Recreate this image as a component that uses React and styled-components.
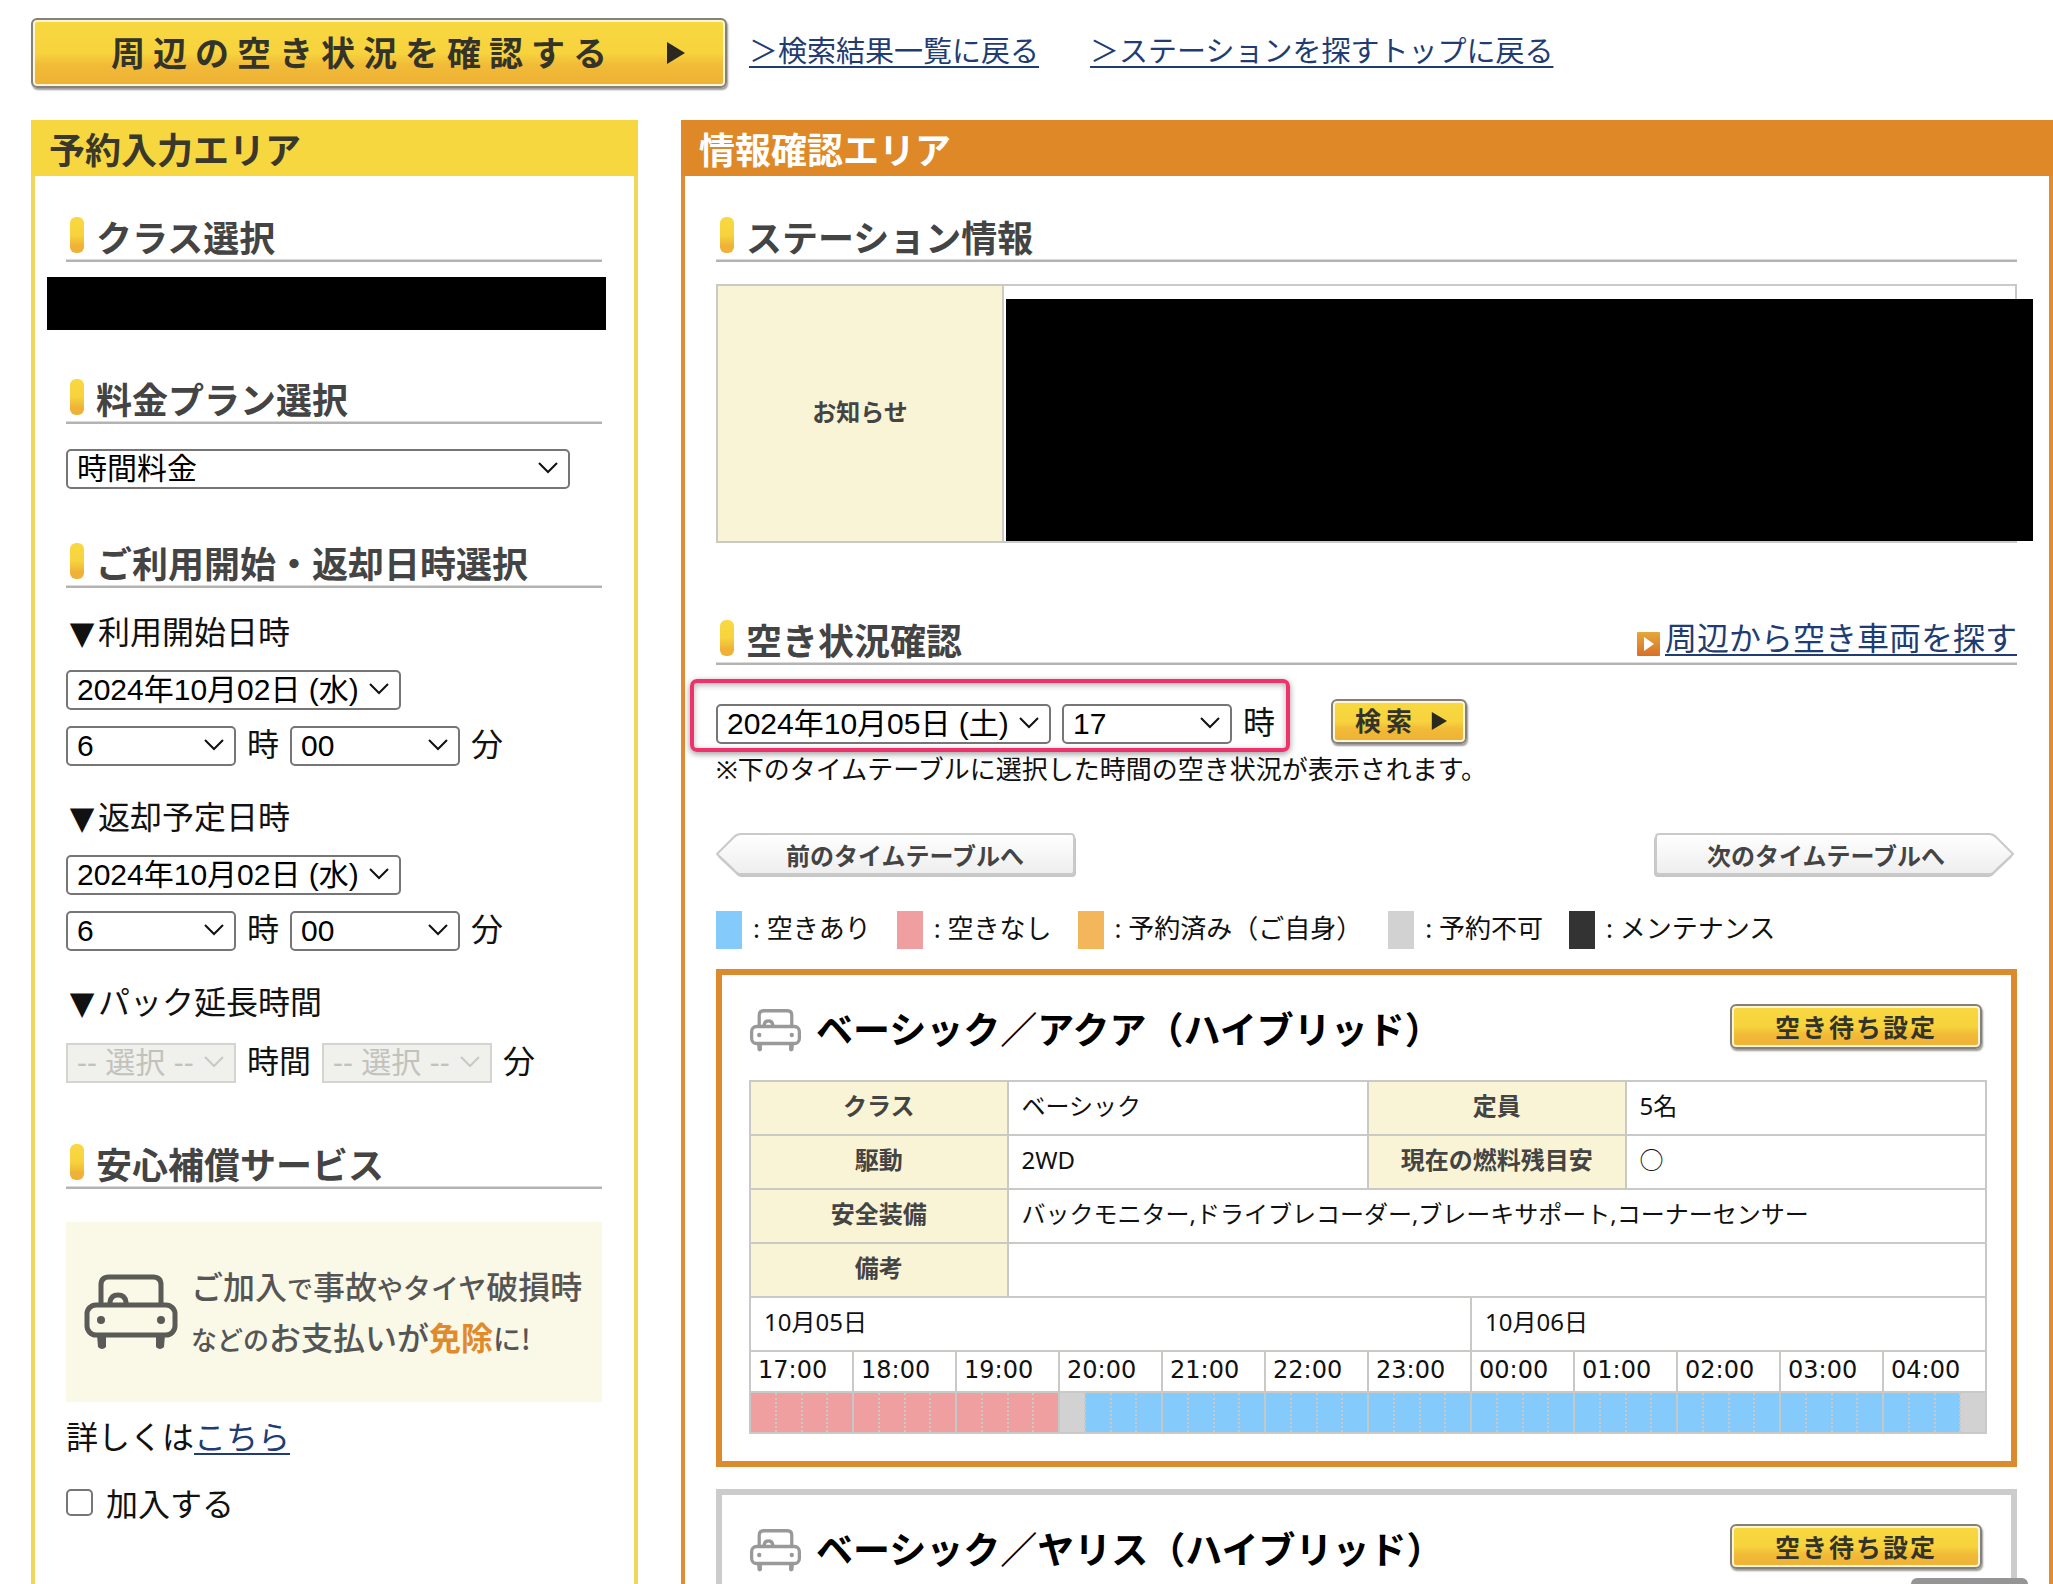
import React from "react";
import styled, { createGlobalStyle, css } from "styled-components";

const jp = `"Noto Sans CJK JP", sans-serif`;

const GlobalStyle = createGlobalStyle`
  *, *::before, *::after { box-sizing: border-box; }
  body {
    margin: 0;
    background: #fff;
    color: #111;
    font-family: "Noto Sans", ${jp};
    font-size: 32px;
    line-height: 40px;
  }
  a { color: #1f3d73; text-underline-offset: 4px; text-decoration-thickness: 2px; }
  h1, h2, h3, p { margin: 0; }
`;

const Page = styled.div`
  display: flex;
  flex-direction: column;
  height: 100vh;
  overflow: hidden;
`;

const TopBar = styled.header`
  display: flex;
  align-items: flex-start;
  flex: none;
  padding: 18px 0 31px 31px;
`;

const TopLinks = styled.nav`
  display: flex;
  gap: 51px;
  padding: 13px 0 0 22px;
  font-size: 29px;
  white-space: nowrap;
`;

const GoldButton = styled.button`
  display: flex;
  align-items: center;
  justify-content: center;
  flex: none;
  border: 2px solid #85817a;
  border-radius: 6px;
  color: #333329;
  font-family: ${jp};
  font-weight: 700;
  background: linear-gradient(#f8d840 0%, #f7d33e 50%, #f1bb38 68%, #efb034 100%);
  box-shadow: inset 0 0 0 2px #fdf6d6, 1px 2px 2px #9a9a9a;
  white-space: nowrap;
`;

const AreaButton = styled(GoldButton)`
  width: 696px;
  height: 70px;
  padding: 0 40px 3px 78px;
  justify-content: space-between;
  margin-bottom: 1px;
  font-size: 34px;
  letter-spacing: 8px;

  svg { margin-top: 3px; }
`;

const SearchButton = styled(GoldButton)`
  width: 136px;
  height: 45px;
  margin: 0 0 2px 45px;
  padding: 0 18px 3px 22px;
  justify-content: space-between;
  font-size: 26px;
  letter-spacing: 5px;

  svg { margin-top: 3px; }
`;

const WaitButton = styled(GoldButton)`
  width: 252px;
  height: 45px;
  margin: 0 5px 2px auto;
  padding-bottom: 3px;
  font-size: 25px;
  letter-spacing: 2px;
`;

const Columns = styled.main`
  display: flex;
  flex: 1;
  gap: 43px;
  min-height: 0;
  padding-left: 31px;
`;

const Panel = styled.section`
  display: flex;
  flex-direction: column;
  min-width: 0;
  border: solid ${(p) => p.$color};
  border-width: 0 4px;
`;

const EntryPanel = styled(Panel)`
  flex: 0 0 607px;
`;

const InfoPanel = styled(Panel)`
  flex: 1;
`;

const PanelTitle = styled.h1`
  flex: none;
  height: 56px;
  margin: 0 -4px;
  padding-left: 18px;
  background: ${(p) => p.$bg};
  color: ${(p) => p.$ink};
  font-family: ${jp};
  font-size: 36px;
  line-height: 56px;
`;

const PanelBody = styled.div`
  display: flex;
  flex-direction: column;
  flex: 1;
  min-height: 0;
  padding: 41px 32px 0 31px;
`;

const Heading = styled.div`
  display: flex;
  flex: none;
  height: 45px;
  margin-top: ${(p) => p.$top || 0}px;
  padding-left: 4px;
  border-bottom: 2px solid #b3b3b3;
  box-shadow: inset 0 -1px #dadada;

  &::before {
    content: "";
    width: 14px;
    height: 36px;
    margin-right: 12px;
    border-radius: 6px;
    background: linear-gradient(#f8d942 0%, #f7d33e 50%, #efb236 80%, #efb236 100%);
  }

  h2 {
    color: #444;
    font-family: ${jp};
    font-size: 36px;
    line-height: 39px;
    white-space: nowrap;
  }
`;

const HeadingLink = styled.a`
  display: flex;
  align-items: flex-end;
  gap: 5px;
  margin-left: auto;
  height: 38px;
  white-space: nowrap;
  text-decoration: none;

  span {
    line-height: 40px;
    text-decoration: underline;
    text-decoration-thickness: 2px;
  }
`;

const ClassMask = styled.div`
  flex: none;
  height: 53px;
  margin: 15px -4px 0 -19px;
  background: #000;
`;

const Field = styled.span`
  position: relative;
  display: block;
  flex: none;
  width: ${(p) => p.$width}px;
  height: 40px;
  margin-top: ${(p) => p.$top || 0}px;

  svg {
    position: absolute;
    right: 12px;
    top: 15px;
    pointer-events: none;
    color: ${(p) => (p.$off ? "#c8c8c4" : "#111")};
  }
`;

const Select = styled.select`
  appearance: none;
  width: 100%;
  height: 40px;
  padding: 0 0 0 9px;
  border: 2px solid #767676;
  border-radius: 5px;
  background: #fff;
  color: #000;
  font: 30px/36px "Liberation Sans", ${jp};
  opacity: 1;

  &:disabled {
    border-color: #d4d4d0;
    border-radius: 0;
    background: #f0f0ec;
    color: #c2c2bc;
  }
`;

const Stack = styled.div`
  display: flex;
  flex-direction: column;
  gap: ${(p) => p.$gap || 16}px;
  margin-top: ${(p) => p.$top}px;
`;

const DownMark = styled.span`
  display: inline-block;
  width: 32px;
  text-align: center;
  line-height: 1;
  font-family: "DejaVu Sans", sans-serif;
`;

const Row = styled.div`
  display: flex;
  align-items: center;
  gap: 11px;
`;

const Banner = styled.div`
  display: flex;
  align-items: center;
  flex: none;
  gap: 13px;
  height: 180px;
  margin-top: 33px;
  padding: 0 0 0 18px;
  background: #faf8e6;
  color: #555;
  font-family: ${jp};
  font-weight: 500;
  font-size: 32px;
  line-height: 49px;
  white-space: nowrap;

  small { font-size: 26px; }
  i { font-size: 28px; font-style: normal; }
  strong { color: #e08a2c; }
`;

const Detail = styled.p`
  margin-top: 15px;
`;

const JoinLabel = styled.label`
  display: flex;
  align-items: center;
  gap: 13px;
  margin-top: 27px;

  input {
    appearance: none;
    width: 27px;
    height: 27px;
    margin: 0 0 4px;
    border: 2px solid #767676;
    border-radius: 5px;
    background: #fff;
  }
`;

const cellBorder = css`
  border: 2px solid #c9c9c5;
`;

const Table = styled.table`
  width: 100%;
  border-collapse: collapse;
  table-layout: fixed;
  font-size: 24px;
  line-height: 32px;

  th {
    ${cellBorder}
    padding: 0 0 4px;
    background: #f9f4d6;
    color: #444;
    font-weight: 700;
    white-space: nowrap;
  }
  td {
    ${cellBorder}
    padding: 0 0 4px 13px;
    white-space: nowrap;
  }
`;

const NoticeTable = styled(Table)`
  flex: none;
  height: 259px;
  margin-top: 22px;

  th { width: 286px; }
  td { position: relative; }
`;

const NoticeMask = styled.div`
  position: absolute;
  inset: 13px -18px 0 2px;
  background: #000;
`;

const SearchRow = styled.div`
  position: relative;
  display: flex;
  align-items: center;
  gap: 11px;
  flex: none;
  height: 46px;
  margin-top: 34px;
`;

const Marker = styled.div`
  position: absolute;
  left: -26px;
  top: -20px;
  width: 600px;
  height: 73px;
  border: 4px solid #f0326c;
  border-radius: 7px;
  box-shadow: 0 2px 6px rgba(0, 0, 0, 0.4), inset 0 2px 6px rgba(0, 0, 0, 0.3);
  pointer-events: none;
`;

const Note = styled.p`
  margin-top: 8px;
  font-size: 26px;
  line-height: 32px;
  white-space: nowrap;
`;

const Pager = styled.div`
  display: flex;
  justify-content: space-between;
  flex: none;
  margin: 48px 3px 0 0;
`;

const PagerButton = styled.button`
  display: grid;
  align-items: center;
  width: 360px;
  height: 45px;
  padding: 0;
  border: 0;
  background: none;
  color: #444;
  font: 700 24px/32px ${jp};

  svg, span { grid-area: 1 / 1; }
  svg { transform: ${(p) => (p.$next ? "scaleX(-1)" : "none")}; }
  span {
    z-index: 1;
    padding: ${(p) => (p.$next ? "0 16px 2px 0" : "0 0 2px 18px")};
  }
`;

const Legend = styled.ul`
  display: flex;
  flex: none;
  gap: 26px;
  margin: 33px 0 0;
  padding: 0;
  list-style: none;
  font-size: 26px;
  line-height: 34px;
  white-space: nowrap;
`;

const LegendItem = styled.li`
  display: flex;
  gap: 11px;

  &::before {
    content: "";
    width: 26px;
    height: 38px;
    background: ${(p) => p.$color};
  }
`;

const Card = styled.article`
  display: flex;
  flex-direction: column;
  flex: ${(p) => (p.$rest ? 1 : "none")};
  margin-top: ${(p) => (p.$rest ? 22 : 20)}px;
  padding: 29px 24px ${(p) => (p.$rest ? 0 : 27)}px 27px;
  border: 6px solid ${(p) => p.$color};
  border-bottom-width: ${(p) => (p.$rest ? 0 : 6)}px;
`;

const CardHead = styled.div`
  display: flex;
  align-items: center;
  gap: 15px;
  height: 47px;

  svg { flex: none; margin: 5px 0 0 1px; }
  h3 {
    font-family: ${jp};
    font-size: 37px;
    line-height: 46px;
    color: #000;
    white-space: nowrap;
  }
`;

const VehicleTable = styled(Table)`
  margin-top: 29px;

  tr { height: 54px; }
`;

const HourRow = styled.tr`
  && { height: 41px; }
  && td {
    padding: 0 0 4px 7px;
    font-family: "DejaVu Sans", sans-serif;
  }
`;

const SlotRow = styled.tr`
  && { height: 41px; }
`;

const Slot = styled.td`
  && {
    padding: 0;
    background: ${(p) => p.$color};
    border-left: 2px ${(p) => (p.$hour ? "solid" : "dotted")} #c4c8c8;
    border-right-style: dotted;
  }
  &&:last-child { border-right-style: solid; }
`;

const PageTop = styled.div`
  position: fixed;
  right: 25px;
  bottom: 0;
  width: 117px;
  height: 6px;
  border-radius: 6px 6px 0 0;
  background: #959595;
`;

const Chevron = () => (
  <svg width="20" height="12" viewBox="0 0 20 12" fill="none" stroke="currentColor" strokeWidth="2">
    <path d="M1 1l9 9 9-9" />
  </svg>
);

const Triangle = ({ w = 19, h = 22 }) => (
  <svg width={w} height={h} viewBox="0 0 19 22" preserveAspectRatio="none">
    <path d="M1 0L19 11 1 22z" fill="#2a281f" />
  </svg>
);

const Car = ({ width, height, color, line = 5 }) => (
  <svg width={width} height={height} viewBox="0 0 94 76" preserveAspectRatio="none" fill="none" stroke={color} strokeWidth={line}>
    <path d="M17 31V11q0-8 8-8h44q8 0 8 8v20" />
    <path d="M26 31v-3q1-7 8-7t8 7v3" />
    <rect x="3" y="31" width="88" height="30" rx="9" />
    <circle cx="17" cy="46" r="4" fill={color} stroke="none" />
    <circle cx="77" cy="46" r="4" fill={color} stroke="none" />
    <path d="M13 61h9v12q-4 4-8 0zM72 61h9l-1 12q-4 4-8 0z" fill={color} stroke="none" />
  </svg>
);

const ArrowBadge = () => (
  <svg width="23" height="26" viewBox="0 0 23 26">
    <defs>
      <linearGradient id="badge" x1="0" y1="0" x2="0" y2="1">
        <stop offset="0" stopColor="#e5a83a" />
        <stop offset="1" stopColor="#d96f28" />
      </linearGradient>
    </defs>
    <rect width="23" height="24" rx="1" fill="url(#badge)" />
    <path d="M7 5l10 7-10 7z" fill="#fff" />
  </svg>
);

const PagerShape = () => (
  <svg width="360" height="45" viewBox="0 0 360 45">
    <defs>
      <linearGradient id="pager" x1="0" y1="0" x2="0" y2="1">
        <stop offset="0" stopColor="#fff" />
        <stop offset="1" stopColor="#eee" />
      </linearGradient>
    </defs>
    <path d="M24 3H356q4 0 4 4V40q0 4-4 4H26q-4 0-7-4L2 24z" fill="#c6c6c6" />
    <path d="M25 1H355q3 0 3 3V38q0 3-3 3H25q-4 0-7-4L1 21 18 4q3-3 7-3z" fill="url(#pager)" stroke="#cacaca" strokeWidth="2" />
  </svg>
);

const Choice = ({ label, value, width, top, disabled }) => (
  <Field $width={width} $top={top} $off={disabled}>
    <Select aria-label={label} disabled={disabled} defaultValue={value}>
      <option value={value}>{value}</option>
    </Select>
    <Chevron />
  </Field>
);

const DateGroup = ({ title, top }) => (
  <Stack $top={top}>
    <div><DownMark>▼</DownMark>{title}</div>
    <Choice label={title} value="2024年10月02日 (水)" width={335} />
    <Row>
      <Choice label="時" value="6" width={170} />
      <span>時</span>
      <Choice label="分" value="00" width={170} />
      <span>分</span>
    </Row>
  </Stack>
);

const colors = { free: "#84cafb", full: "#f09fa1", none: "#d2d2d2" };
const hours = ["17", "18", "19", "20", "21", "22", "23", "00", "01", "02", "03", "04"];
const slots = Array.from({ length: 48 }, (_, i) =>
  i < 12 ? "full" : i === 12 || i === 47 ? "none" : "free"
);

const legend = [
  ["#84cafb", "空きあり"],
  ["#f09fa1", "空きなし"],
  ["#f3b65a", "予約済み（ご自身）"],
  ["#d2d2d2", "予約不可"],
  ["#333", "メンテナンス"],
];

const CardTitle = ({ children }) => (
  <CardHead>
    <Car width={51} height={43} color="#999" line={6} />
    <h3>{children}</h3>
    <WaitButton type="button">空き待ち設定</WaitButton>
  </CardHead>
);

export default function App() {
  return (
    <Page>
      <GlobalStyle />
      <TopBar>
        <AreaButton type="button">
          周辺の空き状況を確認する
          <Triangle />
        </AreaButton>
        <TopLinks>
          <a href="#results">＞検索結果一覧に戻る</a>
          <a href="#stations">＞ステーションを探すトップに戻る</a>
        </TopLinks>
      </TopBar>

      <Columns>
        <EntryPanel $color="#f0d75c">
          <PanelTitle $bg="#f7d740" $ink="#3a382a">予約入力エリア</PanelTitle>
          <PanelBody>
            <Heading><h2>クラス選択</h2></Heading>
            <ClassMask />

            <Heading $top={49}><h2>料金プラン選択</h2></Heading>
            <Choice label="料金プラン選択" value="時間料金" width={504} top={23} />

            <Heading $top={56}><h2>ご利用開始・返却日時選択</h2></Heading>
            <DateGroup title="利用開始日時" top={24} />
            <DateGroup title="返却予定日時" top={33} />
            <Stack $top={33} $gap={19}>
              <div><DownMark>▼</DownMark>パック延長時間</div>
              <Row>
                <Choice label="時間" value="-- 選択 --" width={170} disabled />
                <span>時間</span>
                <Choice label="分" value="-- 選択 --" width={170} disabled />
                <span>分</span>
              </Row>
            </Stack>

            <Heading $top={63}><h2>安心補償サービス</h2></Heading>
            <Banner>
              <Car width={94} height={76} color="#5a5a56" />
              <div>
                ご加入<small>で</small>事故<small>や</small><i>タイヤ</i>破損時
                <br />
                <small>などの</small>お支払いが<strong>免除</strong><i>に!</i>
              </div>
            </Banner>
            <Detail>詳しくは<a href="#detail">こちら</a></Detail>
            <JoinLabel><input type="checkbox" />加入する</JoinLabel>
          </PanelBody>
        </EntryPanel>

        <InfoPanel $color="#df8c34">
          <PanelTitle $bg="#df8828" $ink="#fff">情報確認エリア</PanelTitle>
          <PanelBody>
            <Heading><h2>ステーション情報</h2></Heading>
            <NoticeTable>
              <tbody>
                <tr>
                  <th scope="row">お知らせ</th>
                  <td><NoticeMask /></td>
                </tr>
              </tbody>
            </NoticeTable>

            <Heading $top={77}>
              <h2>空き状況確認</h2>
              <HeadingLink href="#nearby">
                <ArrowBadge />
                <span>周辺から空き車両を探す</span>
              </HeadingLink>
            </Heading>

            <SearchRow>
              <Choice label="日付" value="2024年10月05日 (土)" width={335} />
              <Choice label="時" value="17" width={170} />
              <span>時</span>
              <SearchButton type="button">
                検索
                <Triangle w={16} h={18} />
              </SearchButton>
              <Marker />
            </SearchRow>
            <Note>※下のタイムテーブルに選択した時間の空き状況が表示されます。</Note>

            <Pager>
              <PagerButton type="button"><PagerShape /><span>前のタイムテーブルへ</span></PagerButton>
              <PagerButton type="button" $next><PagerShape /><span>次のタイムテーブルへ</span></PagerButton>
            </Pager>

            <Legend>
              {legend.map(([color, text]) => (
                <LegendItem key={text} $color={color}>: {text}</LegendItem>
              ))}
            </Legend>

            <Card $color="#dc8a2e">
              <CardTitle>ベーシック／アクア（ハイブリッド）</CardTitle>
              <VehicleTable>
                <colgroup>{slots.map((_, i) => <col key={i} />)}</colgroup>
                <tbody>
                  <tr>
                    <th scope="row" colSpan={10}>クラス</th>
                    <td colSpan={14}>ベーシック</td>
                    <th scope="row" colSpan={10}>定員</th>
                    <td colSpan={14}>5名</td>
                  </tr>
                  <tr>
                    <th scope="row" colSpan={10}>駆動</th>
                    <td colSpan={14}>2WD</td>
                    <th scope="row" colSpan={10}>現在の燃料残目安</th>
                    <td colSpan={14}>○</td>
                  </tr>
                  <tr>
                    <th scope="row" colSpan={10}>安全装備</th>
                    <td colSpan={38}>バックモニター,ドライブレコーダー,ブレーキサポート,コーナーセンサー</td>
                  </tr>
                  <tr>
                    <th scope="row" colSpan={10}>備考</th>
                    <td colSpan={38} />
                  </tr>
                  <tr>
                    <td colSpan={28}>10月05日</td>
                    <td colSpan={20}>10月06日</td>
                  </tr>
                  <HourRow>
                    {hours.map((h) => <td key={h} colSpan={4}>{h}:00</td>)}
                  </HourRow>
                  <SlotRow>
                    {slots.map((s, i) => <Slot key={i} $color={colors[s]} $hour={i % 4 === 0} />)}
                  </SlotRow>
                </tbody>
              </VehicleTable>
            </Card>

            <Card $color="#ccc" $rest>
              <CardTitle>ベーシック／ヤリス（ハイブリッド）</CardTitle>
            </Card>
          </PanelBody>
        </InfoPanel>
      </Columns>
      <PageTop />
    </Page>
  );
}
